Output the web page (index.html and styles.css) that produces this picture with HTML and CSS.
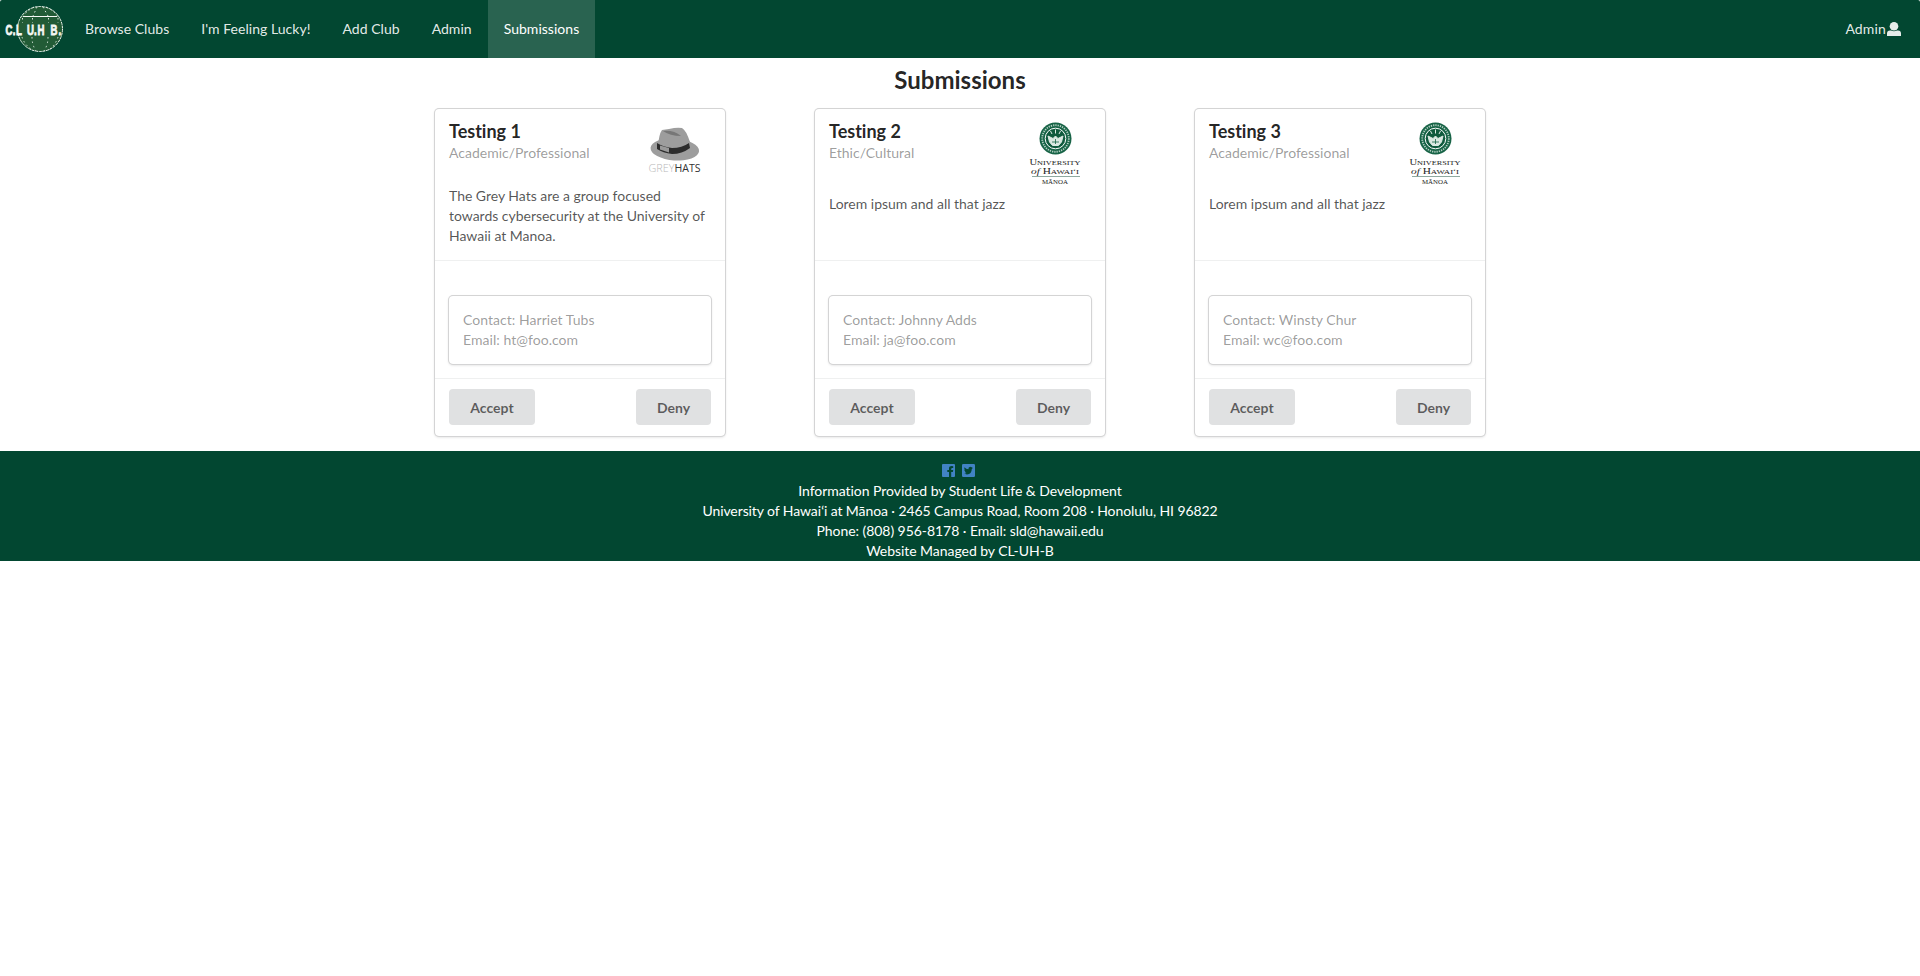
FILE: index.html
```html
<!DOCTYPE html>
<html lang="en">
<head>
<meta charset="utf-8">
<title>Submissions</title>
<link rel="stylesheet" href="styles.css">
</head>
<body>
<svg class="defs" aria-hidden="true">
  <symbol id="uh" viewBox="0 0 70 75">
    <circle cx="35.500" cy="23.500" r="16" fill="#176346"/>
    <circle cx="35.500" cy="23.500" r="13.300" fill="none" stroke="#b3cfc2" stroke-width="1.800" stroke-dasharray="1.300 1"/>
    <circle cx="35.500" cy="23.500" r="10.300" fill="#0f5a3d" stroke="#fff" stroke-width="1"/>
    <path d="M28 21l5 2.500 2.500-2.500 2.500 2.500 5-2.500-1.500 6-3 3.500h-6l-3-3.500zM30.500 16l1.500 3M35.500 14.500v4M40.500 16l-1.500 3" fill="#dbe9e2" stroke="#dbe9e2" stroke-width="1"/>
    <path d="M32 27h7M35.500 24v5" fill="none" stroke="#176346" stroke-width=".8"/>
    <g class="uh-text" text-anchor="middle">
      <text x="35" y="50" font-size="9" textLength="51" lengthAdjust="spacingAndGlyphs">U<tspan font-size="7">NIVERSITY</tspan></text>
      <text x="35" y="58.500" font-size="9" textLength="48" lengthAdjust="spacingAndGlyphs"><tspan font-style="italic">of</tspan> H<tspan font-size="7">AWAIʻI</tspan></text>
      <text x="35" y="69.300" font-size="6.500" textLength="26" lengthAdjust="spacingAndGlyphs">MĀNOA</text>
    </g>
    <path d="M12 61.500h48" stroke="#8fa9a0" stroke-width="1"/>
  </symbol>
</svg>

<nav class="nav">
  <a class="logo">
    <svg width="69" height="58" viewBox="0 0 69 58">
      <circle cx="40" cy="29" r="22.500" fill="#225b36" stroke="#e9f1e9" stroke-width="1" stroke-dasharray="3 .7"/>
      <g fill="none" stroke="#dce9df" stroke-width="1" stroke-dasharray="1.500 3">
        <path d="M34 7Q25 12 23 17M46 7Q56 12 58 17M37 7L33 16M43 7L48 16M22 37Q24 44 32 50M32 37Q32 45 36 51M48 37Q48 45 44 51M58 37Q56 44 49 50M22.500 18v5M32.500 18v5M48.500 18v5M58 18v5"/>
      </g>
      <path d="M23 16.500h34" stroke="#f5faf5"/>
      <g class="logo-text" transform="scale(.62 1)">
        <text y="35" x="8.900 20.700 25.800 40 43.500 55 60.500 76 81.500 94.300">C.L U.H B.</text>
      </g>
    </svg>
  </a>
  <a class="item">Browse Clubs</a>
  <a class="item">I'm Feeling Lucky!</a>
  <a class="item">Add Club</a>
  <a class="item">Admin</a>
  <a class="item active">Submissions</a>
  <a class="user">Admin<svg width="14" height="14" viewBox="0 0 14 14" fill="currentColor"><circle cx="7" cy="4.300" r="4.300"/><path d="M0 14v-2.500Q0 8.500 3 8.500h1q3 1.400 6 0h1q3 0 3 3V14z"/></svg></a>
</nav>

<main>
  <h2 class="title">Submissions</h2>
  <div class="cards">
    <article class="card">
      <div class="content main">
        <div class="top">
          <div><div class="name">Testing 1</div><div class="meta">Academic/Professional</div></div>
          <svg class="pic" width="70" height="75" viewBox="0 0 70 75">
            <g transform="translate(0 -2)">
            <ellipse cx="34.800" cy="36.500" rx="24.300" ry="11" transform="rotate(4 34.800 36.500)" fill="#9d9d9d"/>
            <path d="M18 33q1-12 4-16l7-1q8-2 13-1 4 2 8 14l-1 7-12 3-18-3z" fill="#9d9d9d"/>
            <path d="M23 18q11-1 18 5-11 0-18-5z" fill="#777"/>
            <path d="M17 30q6 4 15 5 10 0 17-5l1 5q-8 6-18 6-9-1-15-5z" fill="#2c2c2c"/>
            <path d="M20 32.500l9 2.500v4.500l-9-3z" fill="#999"/>
            </g>
            <g class="hat-text"><text x="8.500" y="57" fill="#b9b9b9" font-weight="300" textLength="26" lengthAdjust="spacingAndGlyphs">GREY</text><text x="34.500" y="57" fill="#333" textLength="26" lengthAdjust="spacingAndGlyphs">HATS</text></g>
          </svg>
        </div>
        <p class="desc">The Grey Hats are a group focused towards cybersecurity at the University of Hawaii at Manoa.</p>
      </div>
      <div class="content contact"><div class="box">Contact: Harriet Tubs<br>Email: ht@foo.com</div></div>
      <div class="content actions"><button class="btn accept">Accept</button><button class="btn deny">Deny</button></div>
    </article>
    <article class="card">
      <div class="content main">
        <div class="top tall">
          <div><div class="name">Testing 2</div><div class="meta">Ethic/Cultural</div></div>
          <svg class="pic" width="70" height="75"><use href="#uh"/></svg>
        </div>
        <p class="desc">Lorem ipsum and all that jazz</p>
      </div>
      <div class="content contact"><div class="box">Contact: Johnny Adds<br>Email: ja@foo.com</div></div>
      <div class="content actions"><button class="btn accept">Accept</button><button class="btn deny">Deny</button></div>
    </article>
    <article class="card">
      <div class="content main">
        <div class="top tall">
          <div><div class="name">Testing 3</div><div class="meta">Academic/Professional</div></div>
          <svg class="pic" width="70" height="75"><use href="#uh"/></svg>
        </div>
        <p class="desc">Lorem ipsum and all that jazz</p>
      </div>
      <div class="content contact"><div class="box">Contact: Winsty Chur<br>Email: wc@foo.com</div></div>
      <div class="content actions"><button class="btn accept">Accept</button><button class="btn deny">Deny</button></div>
    </article>
  </div>
</main>

<footer class="footer">
  <div class="social">
    <svg width="13" height="13" viewBox="0 0 13 13"><path fill="#4183c4" d="M1 0h11q1 0 1 1v11q0 1-1 1H9.200V8h1.700l.3-2h-2V5q0-1 1-1h1V2.200Q7 1.500 7 4.500V6H5.300v2H7v5H1q-1 0-1-1V1q0-1 1-1z"/></svg>
    <svg width="13" height="13" viewBox="0 0 13 13"><rect width="13" height="13" rx="1.200" fill="#4183c4"/><path fill="#024731" d="M10.800 3.900l-1 1Q9.700 10 5 10.400q-1.700 0-2.900-.8 1.500 0 2.400-.7-1.300-.2-1.700-1.300h.8Q2.200 7 2.200 5.600l.8.200Q1.800 4.700 2.500 3.200q1.500 1.800 3.900 2Q6.200 2.800 8.200 2.700q.8 0 1.300.6l1.200-.4-.8 1z"/></svg>
  </div>
  <div>Information Provided by Student Life &amp; Development</div>
  <div class="address">University of Hawaiʻi at Mānoa · 2465 Campus Road, Room 208 · Honolulu, HI 96822</div>
  <div>Phone: (808) 956-8178 · Email: sld@hawaii.edu</div>
  <div>Website Managed by CL-UH-B</div>
</footer>
</body>
</html>
```

FILE: styles.css
```css
* { box-sizing: border-box; }
body {
  margin: 0;
  background: #fff;
  color: rgba(0, 0, 0, .87);
  font: 14px/20px Lato, "Liberation Sans", sans-serif;
  font-variant-ligatures: none;
}
.defs { display: none; }
.nav {
  display: flex;
  height: 58px;
  background: #024731;
  border-radius: 2px 2px 0 0;
  color: rgba(255, 255, 255, .9);
}
.logo { width: 69px; }
.logo svg { display: block; }
.logo-text {
  fill: #f4f8f4;
  stroke: #f4f8f4;
  stroke-width: .9px;
  font: bold 15.500px "Liberation Sans", sans-serif;
}
.item { display: flex; align-items: center; padding: 0 16px; letter-spacing: .03px; }
.item.active { width: 107px; background: #296350; color: #fff; }
.user {
  display: flex;
  align-items: center;
  margin-left: auto;
  padding-right: 19px;
  letter-spacing: .15px;
}
.user svg { margin-left: 1px; }
.title {
  margin: 6px 0 14px;
  font-size: 24px;
  line-height: 31px;
  text-align: center;
}
.cards { display: flex; justify-content: center; gap: 90px; }
.card {
  display: flex;
  flex-direction: column;
  width: 290px;
  height: 327px;
  border-radius: 4px;
  box-shadow: 0 1px 3px 0 #d4d4d5, 0 0 0 1px #d4d4d5;
}
.content { padding: 14px; }
.main { height: 151px; }
.top { display: flex; justify-content: space-between; height: 63px; }
.top.tall { height: 71px; }
.pic { flex: none; margin: -8px 1px 0 0; }
.name {
  margin-top: -3px;
  font-size: 18px;
  font-weight: bold;
  line-height: 23px;
}
.meta { color: rgba(0, 0, 0, .4); }
.desc { margin: 0; color: rgba(0, 0, 0, .68); letter-spacing: -.02px; }
.contact {
  height: 118px;
  padding-top: 35px;
  border-top: 1px solid rgba(34, 36, 38, .07);
}
.box {
  height: 68px;
  padding: 14px;
  border-radius: 4px;
  box-shadow: 0 1px 3px 0 #d4d4d5, 0 0 0 1px #d4d4d5;
  color: rgba(0, 0, 0, .4);
  letter-spacing: .04px;
}
.actions {
  display: flex;
  justify-content: space-between;
  padding: 10px 14px;
  border-top: 1px solid rgba(34, 36, 38, .07);
}
.btn {
  height: 36px;
  padding: 2px 0 0;
  border: 0;
  border-radius: 4px;
  background: #e0e1e2;
  color: rgba(0, 0, 0, .6);
  font: bold 14px/14px Lato, "Liberation Sans", sans-serif;
}
.accept { width: 86px; }
.deny { width: 75px; }
.footer {
  height: 110px;
  margin-top: 15px;
  padding-top: 10px;
  background: #024731;
  color: #fff;
  text-align: center;
  letter-spacing: -.05px;
}
.address { letter-spacing: -.09px; }
.social {
  display: flex;
  justify-content: center;
  gap: 7px;
  height: 20px;
  padding: 3px 4px 0 0;
}
.hat-text { font: 11px "Open Sans", sans-serif; }
.uh-text { fill: #222; font-family: "Liberation Serif", serif; }
```
